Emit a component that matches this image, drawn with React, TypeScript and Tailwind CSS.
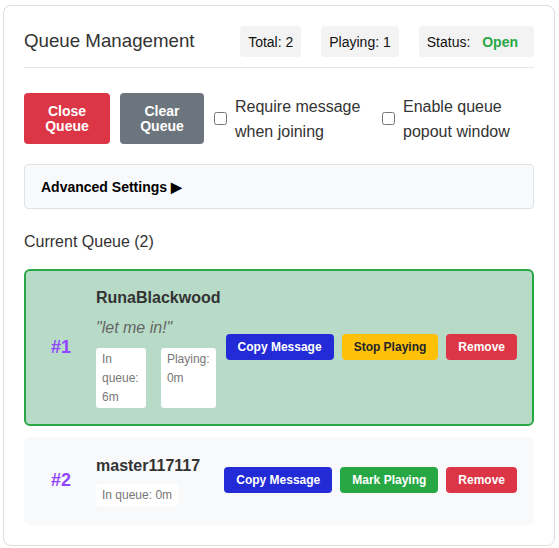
import React from "react";

const font = { fontFamily: '"Liberation Sans", Arial, sans-serif' };

const Btn = ({ label, cls }: { label: string; cls: string }) => (
  <button className={`h-[26px] shrink-0 rounded px-3 text-xs font-bold ${cls}`}>{label}</button>
);

const App = () => {
  return (
    <div style={font} className="pl-[3px] pt-[5px] text-[#333]">
      <section className="w-[552px] rounded-lg border border-[#ddd] bg-white p-5">
        {/* header */}
        <div className="flex items-center justify-between border-b border-[#e6e6e6] pb-2.5">
          <h2 className="text-[18.72px] font-normal text-[#333]">Queue Management</h2>
          <div className="flex gap-5 text-sm text-[#111]">
            <div className="flex h-[31px] items-center rounded bg-[#f3f3f3] px-2">Total: 2</div>
            <div className="flex h-[31px] items-center rounded bg-[#f3f3f3] px-2">Playing: 1</div>
            <div className="flex h-[31px] items-center rounded bg-[#f3f3f3] px-2">
              Status:&nbsp;<span className="px-2 font-bold text-[#28a745]">Open</span>
            </div>
          </div>
        </div>

        {/* controls */}
        <div className="mt-[25px] flex items-center gap-2.5">
          <button className="h-[51px] w-[86px] shrink-0 rounded bg-[#dc3545] px-4 text-sm font-bold leading-[15px] text-white">
            Close Queue
          </button>
          <button className="h-[51px] w-[84px] shrink-0 rounded bg-[#6c757d] px-4 text-sm font-bold leading-[15px] text-white">
            Clear Queue
          </button>
          <label className="flex w-[158px] shrink-0 items-center gap-2 text-base leading-[25px]">
            <input type="checkbox" className="m-0 h-[13px] w-[13px] shrink-0" />
            <span>Require message when joining</span>
          </label>
          <label className="flex flex-1 items-center gap-2 text-base leading-[25px]">
            <input type="checkbox" className="m-0 h-[13px] w-[13px] shrink-0" />
            <span>Enable queue popout window</span>
          </label>
        </div>

        {/* advanced */}
        <div className="mt-5 flex h-[45px] items-center rounded border border-[#dee2e6] bg-[#f8f9fa] px-4 text-sm font-bold text-black">
          Advanced Settings ▶
        </div>

        <h3 className="mt-[23px] text-base leading-5 text-[#333]">Current Queue (2)</h3>

        {/* item 1 */}
        <div className="mt-[17px] flex items-center rounded-md border-2 border-[#28a745] bg-[#b7dbc7] px-[15px] pb-[16px] pt-[15px]">
          <div className="w-10 shrink-0 text-center text-lg font-bold text-[#9146ff]">#1</div>
          <div className="ml-[15px] mr-2.5 min-w-0 flex-1">
            <div className="text-base font-bold leading-6 text-[#333]">RunaBlackwood</div>
            <div className="mt-1.5 text-base italic leading-6 text-[#666]">"let me in!"</div>
            <div className="mt-2 flex gap-[15px] text-xs leading-[19px] text-[#777]">
              <div className="rounded-[3px] bg-white px-1.5 pb-[1px] pt-[2px]">In queue: 6m</div>
              <div className="rounded-[3px] bg-white px-1.5 pb-[1px] pt-[2px]">Playing: 0m</div>
            </div>
          </div>
          <div className="flex shrink-0 gap-2">
            <Btn label="Copy Message" cls="bg-[#232bd6] text-white" />
            <Btn label="Stop Playing" cls="bg-[#ffc107] text-[#212529]" />
            <Btn label="Remove" cls="bg-[#dc3545] text-white" />
          </div>
        </div>

        {/* item 2 */}
        <div className="mt-[11px] flex items-center rounded-md border-2 border-transparent bg-[#f8f9fa] px-[15px] pb-[17px] pt-[15px]">
          <div className="w-10 shrink-0 text-center text-lg font-bold text-[#9146ff]">#2</div>
          <div className="ml-[15px] mr-2.5 min-w-0 flex-1">
            <div className="text-base font-bold leading-6 text-[#333]">master117117</div>
            <div className="mt-1.5 flex text-xs leading-[18px] text-[#777]">
              <div className="rounded-[3px] bg-white px-1.5 py-[2px]">In queue: 0m</div>
            </div>
          </div>
          <div className="flex shrink-0 gap-2">
            <Btn label="Copy Message" cls="bg-[#232bd6] text-white" />
            <Btn label="Mark Playing" cls="bg-[#28a745] text-white" />
            <Btn label="Remove" cls="bg-[#dc3545] text-white" />
          </div>
        </div>
      </section>
    </div>
  );
};

export default App;
